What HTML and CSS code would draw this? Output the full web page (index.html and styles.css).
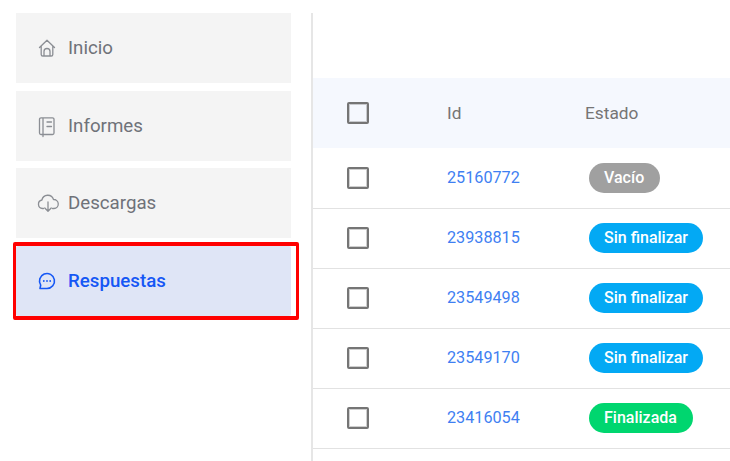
FILE: index.html
```html
<!DOCTYPE html>
<html lang="es">
<head>
<meta charset="utf-8">
<title>Respuestas</title>
<link rel="stylesheet" href="styles.css">
</head>
<body>
<div class="page">
  <nav class="sidebar">
    <a class="nav-item">
      <svg class="nav-icon" viewBox="0 0 18 18"><path d="M1.500 8.500 9 1.300l7.500 7.200M3.200 7.200v8.200a1.600 1.600 0 0 0 1.600 1.600h8.400a1.600 1.600 0 0 0 1.600-1.600V7.200M6 17v-4.500a3 3 0 0 1 6 0V17"/></svg>
      <span>Inicio</span>
    </a>
    <a class="nav-item nav-item-tall">
      <svg class="nav-icon" viewBox="0 0 18 18"><path d="M5 .8h9.500A1.500 1.500 0 0 1 16 2.300v13.700a1.500 1.500 0 0 1-1.500 1.500H5zM5 .8H3A1.500 1.500 0 0 0 1.500 2.300v13.700A1.500 1.500 0 0 0 3 17.500h2V19.500M9 5h4.500M9 9.500h4.500"/></svg>
      <span>Informes</span>
    </a>
    <a class="nav-item">
      <svg class="nav-icon nav-icon-wide" viewBox="0 0 22 20"><path d="M6.500 15.500H5.500a4.300 4.300 0 0 1-.6-8.500A6 6 0 0 1 16.500 6.500a4.500 4.500 0 0 1 .5 9h-1.500M11 9v9M7.800 15l3.200 3.200 3.200-3.200"/></svg>
      <span>Descargas</span>
    </a>
    <a class="nav-item nav-item-active">
      <svg class="nav-icon nav-icon-chat" viewBox="0 0 18 18"><path d="M2 16.500h7a7.500 7.500 0 1 0-6.300-3.400z"/><circle class="dot" cx="5.800" cy="9" r=".9"/><circle class="dot" cx="9" cy="9" r=".9"/><circle class="dot" cx="12.200" cy="9" r=".9"/></svg>
      <span>Respuestas</span>
      <i class="highlight"></i>
    </a>
  </nav>
  <main class="content">
    <div class="table-head">
      <span class="cell-check"><b class="checkbox"></b></span>
      <span class="cell-id">Id</span>
      <span class="cell-state">Estado</span>
    </div>
    <div class="row">
      <span class="cell-check"><b class="checkbox"></b></span>
      <a class="cell-id link">25160772</a>
      <span class="cell-state"><em class="pill pill-grey">Vacío</em></span>
    </div>
    <div class="row">
      <span class="cell-check"><b class="checkbox"></b></span>
      <a class="cell-id link">23938815</a>
      <span class="cell-state"><em class="pill pill-blue">Sin finalizar</em></span>
    </div>
    <div class="row">
      <span class="cell-check"><b class="checkbox"></b></span>
      <a class="cell-id link">23549498</a>
      <span class="cell-state"><em class="pill pill-blue">Sin finalizar</em></span>
    </div>
    <div class="row">
      <span class="cell-check"><b class="checkbox"></b></span>
      <a class="cell-id link">23549170</a>
      <span class="cell-state"><em class="pill pill-blue">Sin finalizar</em></span>
    </div>
    <div class="row">
      <span class="cell-check"><b class="checkbox"></b></span>
      <a class="cell-id link">23416054</a>
      <span class="cell-state"><em class="pill pill-green">Finalizada</em></span>
    </div>
  </main>
</div>
</body>
</html>
```

FILE: styles.css
```css
* { box-sizing: border-box; }
html, body { margin: 0; height: 100%; overflow: hidden; background: #fff; }
body { font-family: Roboto, "Liberation Sans", sans-serif; }

.page { display: flex; width: 730px; height: 461px; padding-top: 13px; }

.sidebar {
  width: 311px;
  padding-left: 16px;
  display: flex;
  flex-direction: column;
}
.nav-item {
  position: relative;
  width: 275px;
  height: 70px;
  margin-bottom: 8px;
  padding-left: 22px;
  display: flex;
  align-items: center;
  background: #f4f4f4;
  color: #6f7279;
  font-size: 18.7px;
  line-height: 20px;
}
.nav-item-tall { margin-bottom: 7px; }
.nav-item span { margin-left: 12px; }
.nav-icon {
  width: 18px;
  height: 18px;
  flex: none;
  overflow: visible;
  fill: none;
  stroke: #8b8e94;
  stroke-width: 1.3;
  stroke-linejoin: round;
  stroke-linecap: round;
}
.nav-icon-wide { width: 22px; height: 20px; margin-left: -1px; margin-right: -3px; }
.nav-item-active {
  background: #dfe5f6;
  color: #1557f5;
  font-weight: 500;
  border-radius: 2px;
}
.nav-icon-chat { stroke: #1557f5; stroke-width: 1.6; }
.nav-icon-chat .dot { fill: #1557f5; stroke: none; }
.highlight {
  position: absolute;
  left: -3px;
  top: -4px;
  width: 286px;
  height: 78px;
  border: 3px solid #ff0000;
  border-width: 4px 3px;
  border-radius: 2px;
}

.content {
  flex: 1;
  border-left: 2px solid #e6e6e6;
  padding-top: 65px;
}
.table-head, .row {
  display: flex;
  align-items: center;
  font-size: 16.2px;
}
.table-head { height: 70px; background: #f5f8fe; color: #757575; font-size: 17.3px; }
.row { height: 60px; padding-bottom: 1px; border-bottom: 1px solid #e2e2e2; }
.table-head + .row { height: 61px; padding-bottom: 0; }
.cell-check { width: 134px; padding-left: 34px; display: flex; }
.cell-id { width: 138px; }
.cell-state { display: flex; }
.checkbox {
  width: 22px;
  height: 22px;
  border: 2px solid #757575;
  border-radius: 2px;
  box-shadow: inset 0 0 0 1px rgba(117, 117, 117, .35);
}
.link { color: #3f7ff2; padding-bottom: 2px; }
.table-head + .row .link { padding-bottom: 1px; }
.pill {
  margin-left: 4px;
  height: 30px;
  padding: 0 15px 2px;
  border-radius: 15px;
  display: flex;
  align-items: center;
  color: #fff;
  font-style: normal;
  font-weight: 500;
  font-size: 16px;
}
.pill-grey { background: #a0a0a0; padding-right: 16px; }
.pill-blue { background: #03a9f4; }
.pill-green { background: #00d66f; padding-right: 16px; }
```
